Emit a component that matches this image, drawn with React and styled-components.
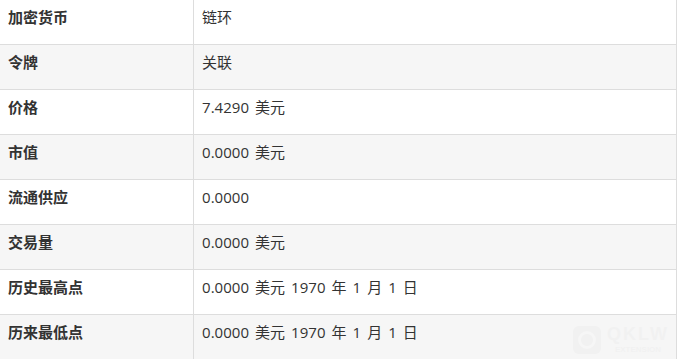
import React from "react";
import styled, { createGlobalStyle } from "styled-components";

const GlobalStyle = createGlobalStyle`
  html, body {
    margin: 0;
    padding: 0;
    background: #fff;
    overflow: hidden;
  }
  body {
    font-family: "Open Sans", "Noto Sans CJK SC", sans-serif;
  }
`;

const rows = [
  ["加密货币", "链环"],
  ["令牌", "关联"],
  ["价格", "7.4290 美元"],
  ["市值", "0.0000 美元"],
  ["流通供应", "0.0000"],
  ["交易量", "0.0000 美元"],
  ["历史最高点", "0.0000 美元 1970 年 1 月 1 日"],
  ["历来最低点", "0.0000 美元 1970 年 1 月 1 日"],
];

export default function App() {
  return (
    <>
      <GlobalStyle />
      <Wrap>
        <Table>
          <tbody>
            {rows.map(([k, v], i) => (
              <Row key={k} $striped={i % 2 === 1}>
                <Label>{k}</Label>
                <Value>{v}</Value>
              </Row>
            ))}
          </tbody>
        </Table>
        <Watermark>
          <Badge>
            <BadgeRing />
          </Badge>
          <MarkText>
            <span>QKLW</span>
            <small>EXTENSION</small>
          </MarkText>
        </Watermark>
      </Wrap>
    </>
  );
}

const Wrap = styled.div`
  position: relative;
  width: 678px;
  height: 360px;
  margin-left: -1px;
  margin-top: -1px;
`;

const Table = styled.table`
  border-collapse: collapse;
  width: 678px;
  table-layout: fixed;
  color: #333;
  font-size: 15px;
`;

const Row = styled.tr`
  height: 45px;
  background: ${(p) => (p.$striped ? "#f6f6f6" : "#fff")};
`;

const Cell = styled.td`
  border: 1px solid #ddd;
  padding: 7px 8px 0;
  vertical-align: top;
  line-height: 20px;
`;

const Label = styled(Cell)`
  width: 177px;
  font-weight: bold;
`;

const Value = styled(Cell)`
  font-weight: normal;
  word-spacing: 2px;
  letter-spacing: 0.05px;
`;

const Watermark = styled.div`
  position: absolute;
  right: 8px;
  bottom: 4px;
  display: flex;
  align-items: center;
  gap: 6px;
  opacity: 0.015;
  pointer-events: none;
`;

const Badge = styled.div`
  width: 28px;
  height: 28px;
  border-radius: 6px;
  background: #000;
  display: flex;
  align-items: center;
  justify-content: center;
`;

const BadgeRing = styled.div`
  width: 12px;
  height: 12px;
  border-radius: 50%;
  border: 3px solid #fff;
`;

const MarkText = styled.div`
  display: flex;
  flex-direction: column;
  align-items: center;
  font-family: "Liberation Sans", Arial, sans-serif;
  font-weight: bold;
  color: #000;
  span {
    font-size: 18px;
    line-height: 21px;
    letter-spacing: 2px;
  }
  small {
    font-size: 8px;
    line-height: 10px;
  }
`;
